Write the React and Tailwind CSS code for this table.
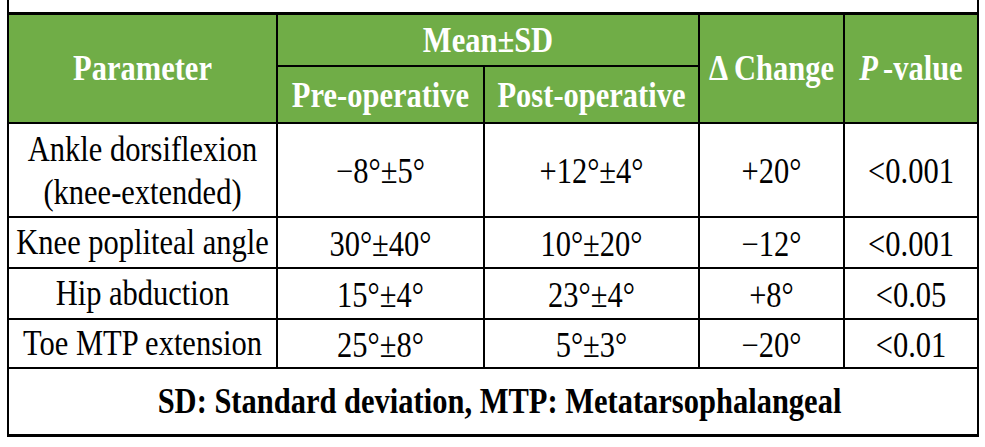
const rows = [
  { name: ['Ankle dorsiflexion', '(knee-extended)'], pre: '−8°±5°', post: '+12°±4°', change: '+20°', p: '<0.001' },
  { name: ['Knee popliteal angle'], pre: '30°±40°', post: '10°±20°', change: '−12°', p: '<0.001' },
  { name: ['Hip abduction'], pre: '15°±4°', post: '23°±4°', change: '+8°', p: '<0.05' },
  { name: ['Toe MTP extension'], pre: '25°±8°', post: '5°±3°', change: '−20°', p: '<0.01' },
];

function Cell({ className = '', children }) {
  return (
    <div className={`flex items-center justify-center text-center ${className}`}>
      <div className="scale-y-[1.14]">{children}</div>
    </div>
  );
}

export default function App() {
  const head = 'bg-[#70ad47] text-white font-bold';
  const body = 'bg-white text-black';

  return (
    <div className="w-[985px] h-[447px] bg-white font-['Liberation_Serif','Times_New_Roman',serif]">
      <div className="ml-[7px] w-[972px] border-l-2 border-r-2 border-black">
        <div className="h-[12px]" />
        <div className="grid grid-cols-[267px_205px_213px_143px_132px] grid-rows-[50px_55px_92px_49px_49px_47px_65px] gap-[2px] bg-black border-t-[3px] border-b-[3px] border-black text-[30.5px] leading-[38px]">
          {/* header */}
          <Cell className={`${head} row-span-2`}>Parameter</Cell>
          <Cell className={`${head} col-span-2 pt-[2px]`}>Mean±SD</Cell>
          <Cell className={`${head} row-span-2`}>Δ Change</Cell>
          <Cell className={`${head} row-span-2`}>
            <i>P</i>
            <span className="ml-[5px]">-value</span>
          </Cell>
          <Cell className={`${head} pt-[3px]`}>Pre-operative</Cell>
          <Cell className={`${head} pt-[3px]`}>Post-operative</Cell>

          {/* body */}
          {rows.map((r) => (
            <div key={r.name[0]} className="contents">
              <Cell className={`${body} pt-[1px]`}>
                {r.name.map((line) => (
                  <div key={line}>{line}</div>
                ))}
              </Cell>
              <Cell className={`${body} pt-[4px]`}>{r.pre}</Cell>
              <Cell className={`${body} pt-[4px]`}>{r.post}</Cell>
              <Cell className={`${body} pt-[4px]`}>{r.change}</Cell>
              <Cell className={`${body} pt-[4px]`}>{r.p}</Cell>
            </div>
          ))}

          {/* footnote */}
          <Cell className={`${body} col-span-5 font-bold pl-[13px]`}>
            SD: Standard deviation, MTP: Metatarsophalangeal
          </Cell>
        </div>
      </div>
    </div>
  );
}
